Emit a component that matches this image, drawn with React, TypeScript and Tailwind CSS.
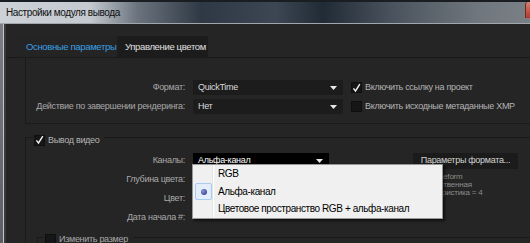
import React from "react";

function Check({ checked }: { checked?: boolean }) {
  return (
    <div className="w-[11px] h-[11px] bg-[#161616] border border-[#0f0f0f] flex items-center justify-center shrink-0">
      {checked && (
        <svg width="10" height="10" viewBox="0 0 10 10">
          <path d="M1.6 5.4 L3.9 8.3 L8.7 0.6" stroke="#f4f4f4" strokeWidth="1.5" fill="none" />
        </svg>
      )}
    </div>
  );
}

function Arrow() {
  return (
    <svg width="7" height="4" viewBox="0 0 7 4" className="shrink-0">
      <path d="M0 0 H7 L3.5 4 Z" fill="#e8e8e8" />
    </svg>
  );
}

function Select({ value, className }: { value: string; className: string }) {
  return (
    <div className={"h-[15px] flex items-center justify-between pl-[5px] pr-[6px] whitespace-nowrap " + className}>
      <span>{value}</span>
      <Arrow />
    </div>
  );
}

export default function App() {
  return (
    <div className="w-[530px] h-[243px] overflow-hidden relative bg-[#252525] text-[9px] tracking-[-0.3px] leading-none font-['Liberation_Sans',Arial,sans-serif]">
      {/* title bar */}
      <div className="h-[24px] flex items-start border-b border-[#a2a7ad] border-t-2 border-t-[#1a1d21] bg-[linear-gradient(90deg,#cdd2d7_0%,#c3c9cf_17%,#6a737d_26%,#2f3945_38%,#3c4753_52%,#212b36_61%,#4a535d_74%,#6f767d_90%,#7a8086_100%)]">
        <div className="flex-1 h-full flex items-center pl-[6px] text-[10px] tracking-[-0.4px] text-[#111]">Настройки модуля вывода</div>
        <div className="w-[5px] h-[16px] bg-[linear-gradient(180deg,#d8806f,#b3382a)] rounded-tl-[3px] border-l border-[#6b2a22]" />
      </div>

      <div className="flex h-[219px]">
        {/* left frame */}
        <div className="w-[6px] flex shrink-0">
          <div className="w-[3px] bg-[linear-gradient(180deg,#7c8086,#5c5f63)]" />
          <div className="w-[1px] bg-[#c6c6c6]" />
          <div className="w-[2px] bg-[#3a3a3a]" />
        </div>

        <div className="flex-1 flex flex-col">
          {/* tabs */}
          <div className="pt-[12px] pl-[12px] flex border-b border-[#1a1a1a] whitespace-nowrap text-[9.5px] tracking-[-0.35px]">
            <div className="h-[21px] w-[99px] pl-[8px] flex items-center bg-[#242424] text-[#3a9fe3]">Основные параметры</div>
            <div className="h-[21px] w-[91px] pl-[8px] flex items-center bg-[#1c1c1c] text-[#e0e0e0]">Управление цветом</div>
          </div>

          {/* format group */}
          <div className="ml-[19px] border-l border-b border-[#1a1a1a] pt-[22px] pb-[9px] flex flex-col gap-[4px] text-[#a8a8a8] whitespace-nowrap">
            <div className="flex items-center">
              <div className="w-[167px] text-right pr-[8px]">Формат:</div>
              <Select value="QuickTime" className="w-[150px] bg-[#1c1c1c] text-[#dadada]" />
              <div className="ml-[8px] mr-[3px]"><Check checked /></div>
              <span className="text-[#b4b4b4]">Включить ссылку на проект</span>
            </div>
            <div className="flex items-center">
              <div className="w-[167px] text-right pr-[8px]">Действие по завершении рендеринга:</div>
              <Select value="Нет" className="w-[150px] bg-[#1c1c1c] text-[#dadada]" />
              <div className="ml-[8px] mr-[3px]"><Check /></div>
              <span className="text-[#b4b4b4]">Включить исходные метаданные XMP</span>
            </div>
          </div>

          {/* video group */}
          <div className="ml-[19px] mt-[13px] border-l border-t border-[#1a1a1a] flex-1 text-[#a8a8a8] whitespace-nowrap">
            <div className="-mt-[6px] ml-[7px] pl-[1px] pr-[5px] bg-[#252525] inline-flex items-center gap-[3px]">
              <Check checked />
              <span className="text-[#b4b4b4]">Вывод видео</span>
            </div>
            <div className="pt-[4px] flex">
              <div className="flex flex-col">
                {["Каналы:", "Глубина цвета:", "Цвет:", "Дата начала #:"].map((l) => (
                  <div key={l} className="h-[19px] w-[167px] pr-[8px] flex items-center justify-end">{l}</div>
                ))}
              </div>
              <div className="h-[19px] flex items-center">
                <Select value="Альфа-канал" className="w-[136px] bg-black text-white" />
              </div>
              <div className="ml-[84px] flex flex-col">
                <div className="h-[19px] flex items-center">
                  <div className="w-[105px] h-[16px] bg-[#1b1b1b] text-[#d4d4d4] flex items-center justify-center">Параметры формата...</div>
                </div>
                <div className="mt-[3px] text-[8px] leading-[8px] tracking-[-0.2px] text-[#8c8c8c]">
                  <div className="pl-[15px]">Waveform</div>
                  <div className="pl-[10px]">Естественная</div>
                  <div>Характеристика = 4</div>
                </div>
              </div>
            </div>

            {/* resize group */}
            <div className="ml-[11px] mt-[10px] border-l border-t border-[#1a1a1a] h-[20px]">
              <div className="-mt-[6px] ml-[6px] pl-[1px] pr-[5px] bg-[#252525] inline-flex items-center gap-[3px]">
                <Check />
                <span>Изменить размер</span>
              </div>
            </div>
          </div>
        </div>
      </div>

      {/* channels popup */}
      <div className="absolute left-[192px] top-[164px] w-[251px] h-[55px] bg-[#f0f0f0] border border-[#979797] shadow-[2px_2px_2px_rgba(0,0,0,0.55)] flex text-[10px] tracking-[-0.4px] text-black whitespace-nowrap">
        <div className="w-[20px] relative border-r border-[#e2e3e3]">
          <div className="absolute left-[2px] top-[18px] w-[17px] h-[17px] border border-[#a8cbf0] rounded-[2px] bg-[#e4eefb] flex items-center justify-center">
            <div className="w-[6px] h-[6px] rounded-full bg-[radial-gradient(circle_at_35%_35%,#8b94d8,#242a78)]" />
          </div>
        </div>
        <div className="flex-1 border-l border-white flex flex-col pl-[4px]">
          <div className="h-[18px] flex items-center">RGB</div>
          <div className="h-[18px] flex items-center">Альфа-канал</div>
          <div className="h-[18px] flex items-center">Цветовое пространство RGB + альфа-канал</div>
        </div>
      </div>
    </div>
  );
}
